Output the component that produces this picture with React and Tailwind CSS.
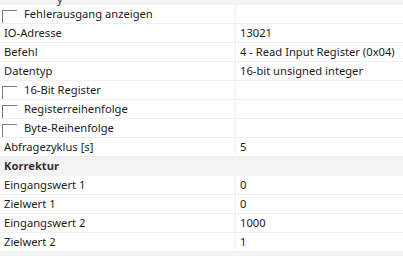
const rows = [
  { type: 'check', label: 'Fehlerausgang anzeigen' },
  { label: 'IO-Adresse', value: '13021' },
  { label: 'Befehl', value: '4 - Read Input Register (0x04)' },
  { label: 'Datentyp', value: '16-bit unsigned integer' },
  { type: 'check', label: '16-Bit Register' },
  { type: 'check', label: 'Registerreihenfolge' },
  { type: 'check', label: 'Byte-Reihenfolge' },
  { label: 'Abfragezyklus [s]', value: '5' },
  { type: 'category', label: 'Korrektur' },
  { label: 'Eingangswert 1', value: '0' },
  { label: 'Zielwert 1', value: '0' },
  { label: 'Eingangswert 2', value: '1000' },
  { label: 'Zielwert 2', value: '1' },
]

function CheckBox() {
  return (
    <div className="mt-[5px] ml-[2px] h-[14px] w-[15px] shrink-0 self-start border-t border-l border-[#7a7a7a]" />
  )
}

function Row({ row }) {
  if (row.type === 'category') {
    return (
      <div className="flex h-[19px] shrink-0 items-center bg-[#f3f3f3] pl-1 font-bold text-[#333]">
        {row.label}
      </div>
    )
  }
  return (
    <div className="flex h-[19px] shrink-0 border-b border-[#f0f0f0]">
      <div className="flex w-[236px] shrink-0 items-center overflow-hidden border-r border-[#f0f0f0]">
        {row.type === 'check' ? (
          <>
            <CheckBox />
            <span className="ml-[7px] whitespace-nowrap">{row.label}</span>
          </>
        ) : (
          <span className="pl-1 whitespace-nowrap">{row.label}</span>
        )}
      </div>
      <div className="flex flex-1 items-center pl-[4px] whitespace-nowrap">{row.value}</div>
    </div>
  )
}

export default function App() {
  return (
    <div
      className="h-[256px] w-[403px] overflow-hidden bg-white text-[11.2px] text-[#1b1b1b]"
      style={{ fontFamily: '"Noto Sans", sans-serif' }}
    >
      <div className="-mt-[14px] flex flex-col">
        {/* category row scrolled mostly out of view, only a descender is left */}
        <div className="flex h-[19px] shrink-0 items-end bg-[#f3f3f3] pl-[57px] text-[#333]">
          <span className="translate-y-[3px] leading-[19px]">y</span>
        </div>
        {rows.map((row, i) => (
          <Row key={i} row={row} />
        ))}
        <div className="h-[19px] shrink-0 bg-[#f3f3f3]" />
      </div>
    </div>
  )
}
